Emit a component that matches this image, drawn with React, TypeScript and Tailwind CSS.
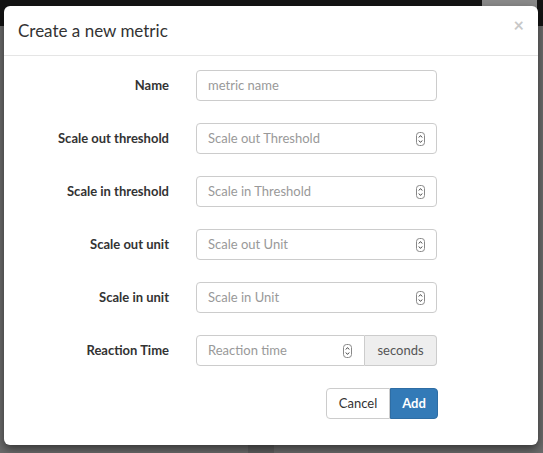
import React from "react";

function Spinner() {
  return (
    <svg width="9" height="14" viewBox="0 0 9 14" className="shrink-0">
      <rect x="0.5" y="0.5" width="8" height="13" rx="3" fill="#fff" stroke="#888" />
      <path d="M2.8 5.5 L4.5 3.6 L6.2 5.5" fill="none" stroke="#444" strokeWidth="1" />
      <path d="M2.8 8.5 L4.5 10.4 L6.2 8.5" fill="none" stroke="#444" strokeWidth="1" />
    </svg>
  );
}

function Row({ label, children }: { label: string; children: React.ReactNode }) {
  return (
    <div className="flex items-center h-[31px]">
      <label className="w-[165px] text-right pr-0 text-[13px] font-bold text-[#333]">{label}</label>
      <div className="ml-[27px] w-[241px]">{children}</div>
    </div>
  );
}

function NumberField({ placeholder }: { placeholder: string }) {
  return (
    <div className="flex items-center h-[31px] border border-[#ccc] rounded-[4px] pl-[11px] pr-[11px] bg-white">
      <span className="flex-1 text-[13px] text-[#999]">{placeholder}</span>
      <Spinner />
    </div>
  );
}

export default function App() {
  return (
    <div
      className="relative w-[543px] h-[453px] bg-[#6b6b6b] overflow-hidden"
      style={{ fontFamily: "Lato, 'Open Sans', sans-serif" }}
    >
      <div className="absolute top-0 left-0 w-full h-[26px] bg-[#141414]" />
      <div className="absolute top-0 right-[6px] w-[55px] h-[22px] bg-[#8a8a8a] rounded-bl-[3px]" />
      <div className="absolute top-[436px] left-[248px] w-[26px] h-[17px] bg-[#5e5e5e]" />
      <div className="absolute top-[6px] left-[4px] w-[534px] h-[439px] bg-white rounded-[6px] shadow-[0_4px_10px_rgba(0,0,0,0.5)] flex flex-col">
        <div className="relative h-[50px] border-b border-[#e5e5e5] flex items-center pl-[14px]">
          <h4 className="text-[17px] text-[#333] mt-[1px]">Create a new metric</h4>
          <span className="absolute right-[14px] top-[10px] text-[18px] font-bold text-[#c8c8c8] leading-none">×</span>
        </div>
        <div className="flex flex-col gap-[22px] pt-[14px]">
          <Row label="Name">
            <div className="flex items-center h-[31px] border border-[#ccc] rounded-[4px] pl-[11px] bg-white">
              <span className="text-[13px] text-[#999]">metric name</span>
            </div>
          </Row>
          <Row label="Scale out threshold">
            <NumberField placeholder="Scale out Threshold" />
          </Row>
          <Row label="Scale in threshold">
            <NumberField placeholder="Scale in Threshold" />
          </Row>
          <Row label="Scale out unit">
            <NumberField placeholder="Scale out Unit" />
          </Row>
          <Row label="Scale in unit">
            <NumberField placeholder="Scale in Unit" />
          </Row>
          <Row label="Reaction Time">
            <div className="flex h-[31px]">
              <div className="flex items-center w-[169px] border border-[#ccc] rounded-l-[4px] pl-[11px] pr-[12px] bg-white">
                <span className="flex-1 text-[13px] text-[#999]">Reaction time</span>
                <Spinner />
              </div>
              <div className="flex-1 flex items-center justify-center border border-l-0 border-[#ccc] rounded-r-[4px] bg-[#eee] text-[13px] text-[#555]">
                seconds
              </div>
            </div>
          </Row>
        </div>
        <div className="flex justify-start pl-[322px] mt-[22px]">
          <button className="h-[31px] w-[64px] border border-[#ccc] rounded-l-[4px] bg-white text-[13px] text-[#333]">
            Cancel
          </button>
          <button className="h-[31px] w-[48px] border border-[#2e6da4] rounded-r-[4px] bg-[#337ab7] text-[13px] font-bold text-white">
            Add
          </button>
        </div>
      </div>
    </div>
  );
}
